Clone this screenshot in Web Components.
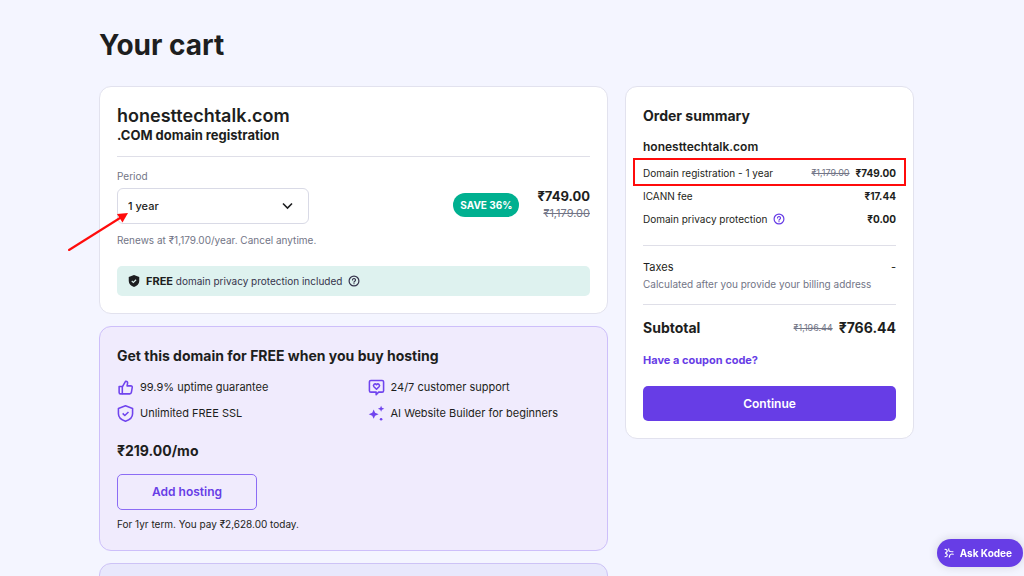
<!DOCTYPE html>
<html lang="en">
<head>
  <meta charset="UTF-8" />
  <meta name="viewport" content="width=device-width, initial-scale=1.0" />
  <title>Your cart</title>
  <style>
    :root {
      --purple: #673de6;
      --purple-mid: #8c6cf5;
      --text: #1d1e20;
      --gray: #727586;
      --line: #dfdfe8;
    }

    body {
      margin: 0;
      min-height: 100vh;
      background-color: #f4f5ff;
      color: var(--text);
      font-family: Inter, "Liberation Sans", sans-serif;
      font-size: 11px;
      line-height: 16px;
    }
  </style>
</head>
<body>
  <cart-page></cart-page>

  <script>
    class CartCard extends HTMLElement {
      constructor() {
        super();
        const shadow = this.attachShadow({ mode: "open" });
        shadow.innerHTML = `
          <style>
            :host {
              display: block;
              box-sizing: border-box;
              padding: 18px 17px 17px;
              border: 1px solid #e2e2ee;
              border-radius: 12px;
              background-color: #ffffff;
            }

            :host([tone="purple"]) {
              border-color: #cdbffa;
              background-color: #f0ebfd;
            }

            :host([tone="blue"]) {
              min-height: 120px;
              border-color: #cdc3f6;
              background-color: #e8e8fc;
            }
          </style>
          <slot></slot>
        `;
      }
    }

    class HelpIcon extends HTMLElement {
      constructor() {
        super();
        const shadow = this.attachShadow({ mode: "open" });
        shadow.innerHTML = `
          <style>
            :host {
              display: inline-flex;
            }
          </style>
          <svg width="12" height="12" viewBox="0 0 24 24" fill="none" stroke="currentColor" stroke-width="2.4" stroke-linecap="round">
            <circle cx="12" cy="12" r="9.8" />
            <path d="M9 10a3 3 0 1 1 4.5 2.6c-1 .6-1.5 1-1.5 1.9" />
            <path d="M12 17.4v.1" />
          </svg>
        `;
      }
    }

    class DomainItem extends HTMLElement {
      constructor() {
        super();
        const shadow = this.attachShadow({ mode: "open" });
        shadow.innerHTML = `
          <style>
            :host {
              display: block;
            }

            h2 {
              margin: 0;
              font-size: 18px;
              line-height: 21px;
              font-weight: 600;
            }

            h3 {
              margin: 0;
              padding-bottom: 12px;
              border-bottom: 1px solid var(--line);
              font-size: 13px;
              line-height: 18px;
              font-weight: 700;
            }

            .plan {
              display: flex;
              align-items: center;
              justify-content: space-between;
              padding-top: 11px;
            }

            .period {
              display: flex;
              flex-direction: column;
              color: var(--gray);
              font-size: 10px;
            }

            .field {
              display: grid;
              align-items: center;
              width: 192px;
              margin: 4px 0 8px;
              position: relative;
            }

            select,
            .chevron {
              grid-area: 1 / 1;
            }

            select {
              appearance: none;
              width: 100%;
              height: 36px;
              padding: 0 10px;
              border: 1px solid #d9dae6;
              border-radius: 6px;
              background-color: #ffffff;
              color: var(--text);
              font: inherit;
              font-size: 11px;
              font-weight: 500;
            }

            .chevron {
              justify-self: end;
              margin-right: 16px;
              pointer-events: none;
            }

            .arrow {
              position: absolute;
              left: -51px;
              top: 22px;
              pointer-events: none;
            }

            .cost {
              display: flex;
              align-items: center;
              gap: 18px;
              padding-bottom: 6px;
            }

            .badge {
              padding: 4px 7px;
              border-radius: 12px;
              background-color: #00b090;
              color: #ffffff;
              font-size: 10px;
              font-weight: 700;
            }

            .prices {
              display: flex;
              flex-direction: column;
              align-items: flex-end;
              line-height: 17px;
            }

            .prices strong {
              font-size: 13px;
              font-weight: 700;
            }

            .prices s {
              color: var(--gray);
            }

            .note {
              display: flex;
              align-items: center;
              gap: 6px;
              margin-top: 18px;
              padding: 7px 11px;
              border-radius: 5px;
              background-color: #def2ef;
              color: #36344d;
              font-size: 10px;
            }

            .note b {
              color: var(--text);
              font-size: 11px;
            }
          </style>
          <h2><slot name="name"></slot></h2>
          <h3><slot name="kind"></slot></h3>
          <div class="plan">
            <div class="period">
              <label for="period">Period</label>
              <div class="field">
                <select id="period">
                  <option>1 year</option>
                  <option>2 years</option>
                </select>
                <svg class="chevron" width="11" height="8" viewBox="0 0 11 8" fill="none" stroke="#1d1e20" stroke-width="1.6">
                  <path d="M1 1.5l4.5 4.5L10 1.5" />
                </svg>
                <svg class="arrow" width="64" height="44" viewBox="0 0 64 44">
                  <path d="M3 40L54 8" stroke="#ff0b0b" stroke-width="2.1" stroke-linecap="round" />
                  <path d="M62 3L56.5 12.500 51 4z" fill="#ff0b0b" />
                </svg>
              </div>
              <span>Renews at ₹1,179.00/year. Cancel anytime.</span>
            </div>
            <div class="cost">
              <span class="badge">SAVE 36%</span>
              <div class="prices">
                <strong>₹749.00</strong>
                <s>₹1,179.00</s>
              </div>
            </div>
          </div>
          <div class="note">
            <svg width="12" height="12" viewBox="0 0 24 24">
              <path d="M12 0l10.500 4v8c0 6-4.500 10-10.500 12C6 22 1.500 18 1.500 12V4z" fill="#1d1e20" />
              <path d="M7.500 12l3.200 3 5.500-5.500" fill="none" stroke="#def2ef" stroke-width="2.2" />
            </svg>
            <span><b>FREE</b> domain privacy protection included</span>
            <help-icon></help-icon>
          </div>
        `;
      }
    }

    const featureIcons = {
      thumb: `
        <path d="M3 10.500h4.500v10.500H5c-1.200 0-2-.8-2-2z" />
        <path d="M7.500 11l4.500-7.800c2.300-.3 3.300 1.100 2.900 3.100l-.7 3.400h5.300c1.400 0 2.200 1 2 2.300l-1.200 7c-.2 1.200-1.100 2-2.300 2H7.500" />`,
      shield: `
        <path d="M12 1.200l10 3.600v7.400c0 5.300-4.300 8.800-10 10.600C6.300 21 2 17.500 2 12.200V4.800z" />
        <path d="M8 11.800l3 3 5.200-5" />`,
      chat: `
        <path d="M4 2h16c1.200 0 2 .8 2 2v12.500c0 1.200-.8 2-2 2h-5L11.500 22v-3.500H4c-1.200 0-2-.8-2-2V4c0-1.200.8-2 2-2z" />
        <path d="M12 14.500L8.400 11C6.300 8.500 9.700 5.500 12 8c2.300-2.500 5.700.5 3.600 3z" />`,
      sparkle: `
        <path fill="currentColor" stroke="none" d="M8 6.500l2 4.500 5 2-5 2-2 4.500L6 15l-5-2 5-2z" />
        <path fill="currentColor" stroke="none" d="M18.500 1l1.200 3 3.300 1.300-3.300 1.300-1.200 3-1.200-3L14 5.300 17.300 4z" />
        <circle fill="currentColor" stroke="none" cx="18.500" cy="20" r="1.800" />`
    };

    class FeatureItem extends HTMLElement {
      constructor() {
        super();
        const shadow = this.attachShadow({ mode: "open" });
        shadow.innerHTML = `
          <style>
            :host {
              display: flex;
              align-items: center;
              gap: 6px;
              font-size: 11px;
              line-height: 18px;
            }

            svg {
              flex: none;
              color: #7044ee;
            }
          </style>
          <svg width="17" height="17" viewBox="0 0 24 24" fill="none" stroke="currentColor" stroke-width="2.2" stroke-linejoin="round">
            ${featureIcons[this.getAttribute("icon")]}
          </svg>
          <slot></slot>
        `;
      }
    }

    class HostingOffer extends HTMLElement {
      constructor() {
        super();
        const shadow = this.attachShadow({ mode: "open" });
        shadow.innerHTML = `
          <style>
            :host {
              display: block;
            }

            h2 {
              margin: 0 0 11px;
              font-size: 14px;
              line-height: 22px;
              font-weight: 700;
            }

            .features {
              display: grid;
              grid-template-columns: 1fr 1fr;
              gap: 8px 28px;
            }

            .price {
              margin: 18px 0 12px;
              font-size: 14px;
              line-height: 22px;
              font-weight: 700;
            }

            button {
              display: block;
              height: 36px;
              padding: 0 34px;
              border: 1px solid var(--purple-mid);
              border-radius: 5px;
              background: none;
              color: var(--purple);
              font: inherit;
              font-size: 12px;
              font-weight: 600;
              cursor: pointer;
            }

            .term {
              margin: 6px 0 1px;
              font-size: 10px;
            }
          </style>
          <h2>Get this domain for FREE when you buy hosting</h2>
          <div class="features">
            <feature-item icon="thumb">99.9% uptime guarantee</feature-item>
            <feature-item icon="chat">24/7 customer support</feature-item>
            <feature-item icon="shield">Unlimited FREE SSL</feature-item>
            <feature-item icon="sparkle">AI Website Builder for beginners</feature-item>
          </div>
          <p class="price">₹219.00/mo</p>
          <button type="button">Add hosting</button>
          <p class="term">For 1yr term. You pay ₹2,628.00 today.</p>
        `;
      }
    }

    class SummaryRow extends HTMLElement {
      constructor() {
        super();
        const shadow = this.attachShadow({ mode: "open" });
        shadow.innerHTML = `
          <style>
            :host {
              display: flex;
              align-items: center;
              justify-content: space-between;
              position: relative;
              font-size: 10px;
              line-height: 16px;
            }

            :host([marked])::after {
              content: "";
              position: absolute;
              inset: -7px -10px -5px;
              border: 2px solid #ff0b0b;
            }

            :host([total]) {
              font-size: 14px;
              line-height: 22px;
              font-weight: 700;
            }

            .name,
            .amount {
              display: flex;
              align-items: center;
              gap: 6px;
            }

            .amount {
              font-weight: 700;
            }

            ::slotted(s) {
              color: var(--gray);
              font-size: 9px;
              font-weight: 400;
            }

            ::slotted(help-icon) {
              color: var(--purple);
            }
          </style>
          <span class="name"><slot></slot></span>
          <span class="amount"><slot name="old"></slot><slot name="price"></slot></span>
        `;
      }
    }

    class OrderSummary extends HTMLElement {
      constructor() {
        super();
        const shadow = this.attachShadow({ mode: "open" });
        shadow.innerHTML = `
          <style>
            :host {
              display: block;
            }

            h2 {
              margin: 0 0 12px;
              font-size: 14px;
              line-height: 22px;
              font-weight: 700;
            }

            h3 {
              margin: 0 0 10px;
              font-size: 12px;
              line-height: 16px;
              font-weight: 600;
            }

            .items {
              display: flex;
              flex-direction: column;
              gap: 7px;
              padding-bottom: 18px;
            }

            .taxes {
              padding: 12px 0;
              border: solid var(--line);
              border-width: 1px 0;
            }

            .taxes div {
              display: flex;
              justify-content: space-between;
              font-size: 11px;
              line-height: 18px;
            }

            .taxes p {
              margin: 0;
              color: var(--gray);
              font-size: 10px;
              line-height: 16px;
            }

            summary-row[total] {
              margin: 12px 0;
            }

            a {
              display: block;
              color: var(--purple);
              font-size: 11px;
              line-height: 18px;
              font-weight: 700;
              text-decoration: none;
            }

            button {
              width: 100%;
              height: 35px;
              margin-top: 17px;
              border: 0;
              border-radius: 5px;
              background-color: var(--purple);
              color: #ffffff;
              font: inherit;
              font-size: 12px;
              font-weight: 600;
              cursor: pointer;
            }
          </style>
          <h2>Order summary</h2>
          <h3>honesttechtalk.com</h3>
          <div class="items">
            <summary-row marked>Domain registration - 1 year<s slot="old">₹1,179.00</s><span slot="price">₹749.00</span></summary-row>
            <summary-row>ICANN fee<span slot="price">₹17.44</span></summary-row>
            <summary-row>Domain privacy protection<help-icon></help-icon><span slot="price">₹0.00</span></summary-row>
          </div>
          <div class="taxes">
            <div><span>Taxes</span><span>-</span></div>
            <p>Calculated after you provide your billing address</p>
          </div>
          <summary-row total>Subtotal<s slot="old">₹1,196.44</s><span slot="price">₹766.44</span></summary-row>
          <a href="#coupon">Have a coupon code?</a>
          <button type="button">Continue</button>
        `;
      }
    }

    class AskKodee extends HTMLElement {
      constructor() {
        super();
        const shadow = this.attachShadow({ mode: "open" });
        shadow.innerHTML = `
          <style>
            :host {
              display: block;
              position: fixed;
              right: 1px;
              bottom: 9px;
            }

            button {
              display: flex;
              align-items: center;
              gap: 6px;
              height: 28px;
              padding: 0 11px 0 7px;
              border: 0;
              border-radius: 14px;
              background-color: var(--purple);
              box-shadow: 0 0 10px rgba(29, 30, 32, 0.15);
              color: #ffffff;
              font: inherit;
              font-size: 10px;
              font-weight: 700;
              cursor: pointer;
            }
          </style>
          <button type="button">
            <svg width="10" height="10" viewBox="0 0 20 20" fill="none" stroke="#ffffff" stroke-width="2.2" stroke-linecap="round" stroke-linejoin="round">
              <path d="M2 2.500c3 0 4.500 1.500 4.500 4.500M9.500 1.500c-.5 3 .5 5 3.500 5.500l5 .5M18.500 12.500c-3-1-5.500-.5-7 2l-1 4M2 17.500c3 0 4.500-1.500 4.500-4.500L3 10l3.500-3" />
            </svg>
            Ask Kodee
          </button>
        `;
      }
    }

    class CartPage extends HTMLElement {
      constructor() {
        super();
        const shadow = this.attachShadow({ mode: "open" });
        shadow.innerHTML = `
          <style>
            :host {
              display: block;
              height: 100vh;
              overflow: hidden;
            }

            main {
              padding: 28px 110px 0 99px;
            }

            h1 {
              margin: 0 0 23px;
              font-size: 28px;
              line-height: 35px;
              font-weight: 700;
            }

            .columns {
              display: grid;
              grid-template-columns: 509fr 289fr;
              align-items: start;
              gap: 17px;
            }

            .list {
              display: flex;
              flex-direction: column;
              gap: 12px;
            }
          </style>
          <main>
            <h1>Your cart</h1>
            <div class="columns">
              <div class="list">
                <cart-card>
                  <domain-item>
                    <span slot="name">honesttechtalk.com</span>
                    <span slot="kind">.COM domain registration</span>
                  </domain-item>
                </cart-card>
                <cart-card tone="purple"><hosting-offer></hosting-offer></cart-card>
                <cart-card tone="blue"></cart-card>
              </div>
              <cart-card><order-summary></order-summary></cart-card>
            </div>
          </main>
          <ask-kodee></ask-kodee>
        `;
      }
    }

    customElements.define("help-icon", HelpIcon);
    customElements.define("cart-card", CartCard);
    customElements.define("domain-item", DomainItem);
    customElements.define("feature-item", FeatureItem);
    customElements.define("hosting-offer", HostingOffer);
    customElements.define("summary-row", SummaryRow);
    customElements.define("order-summary", OrderSummary);
    customElements.define("ask-kodee", AskKodee);
    customElements.define("cart-page", CartPage);
  </script>
</body>
</html>
